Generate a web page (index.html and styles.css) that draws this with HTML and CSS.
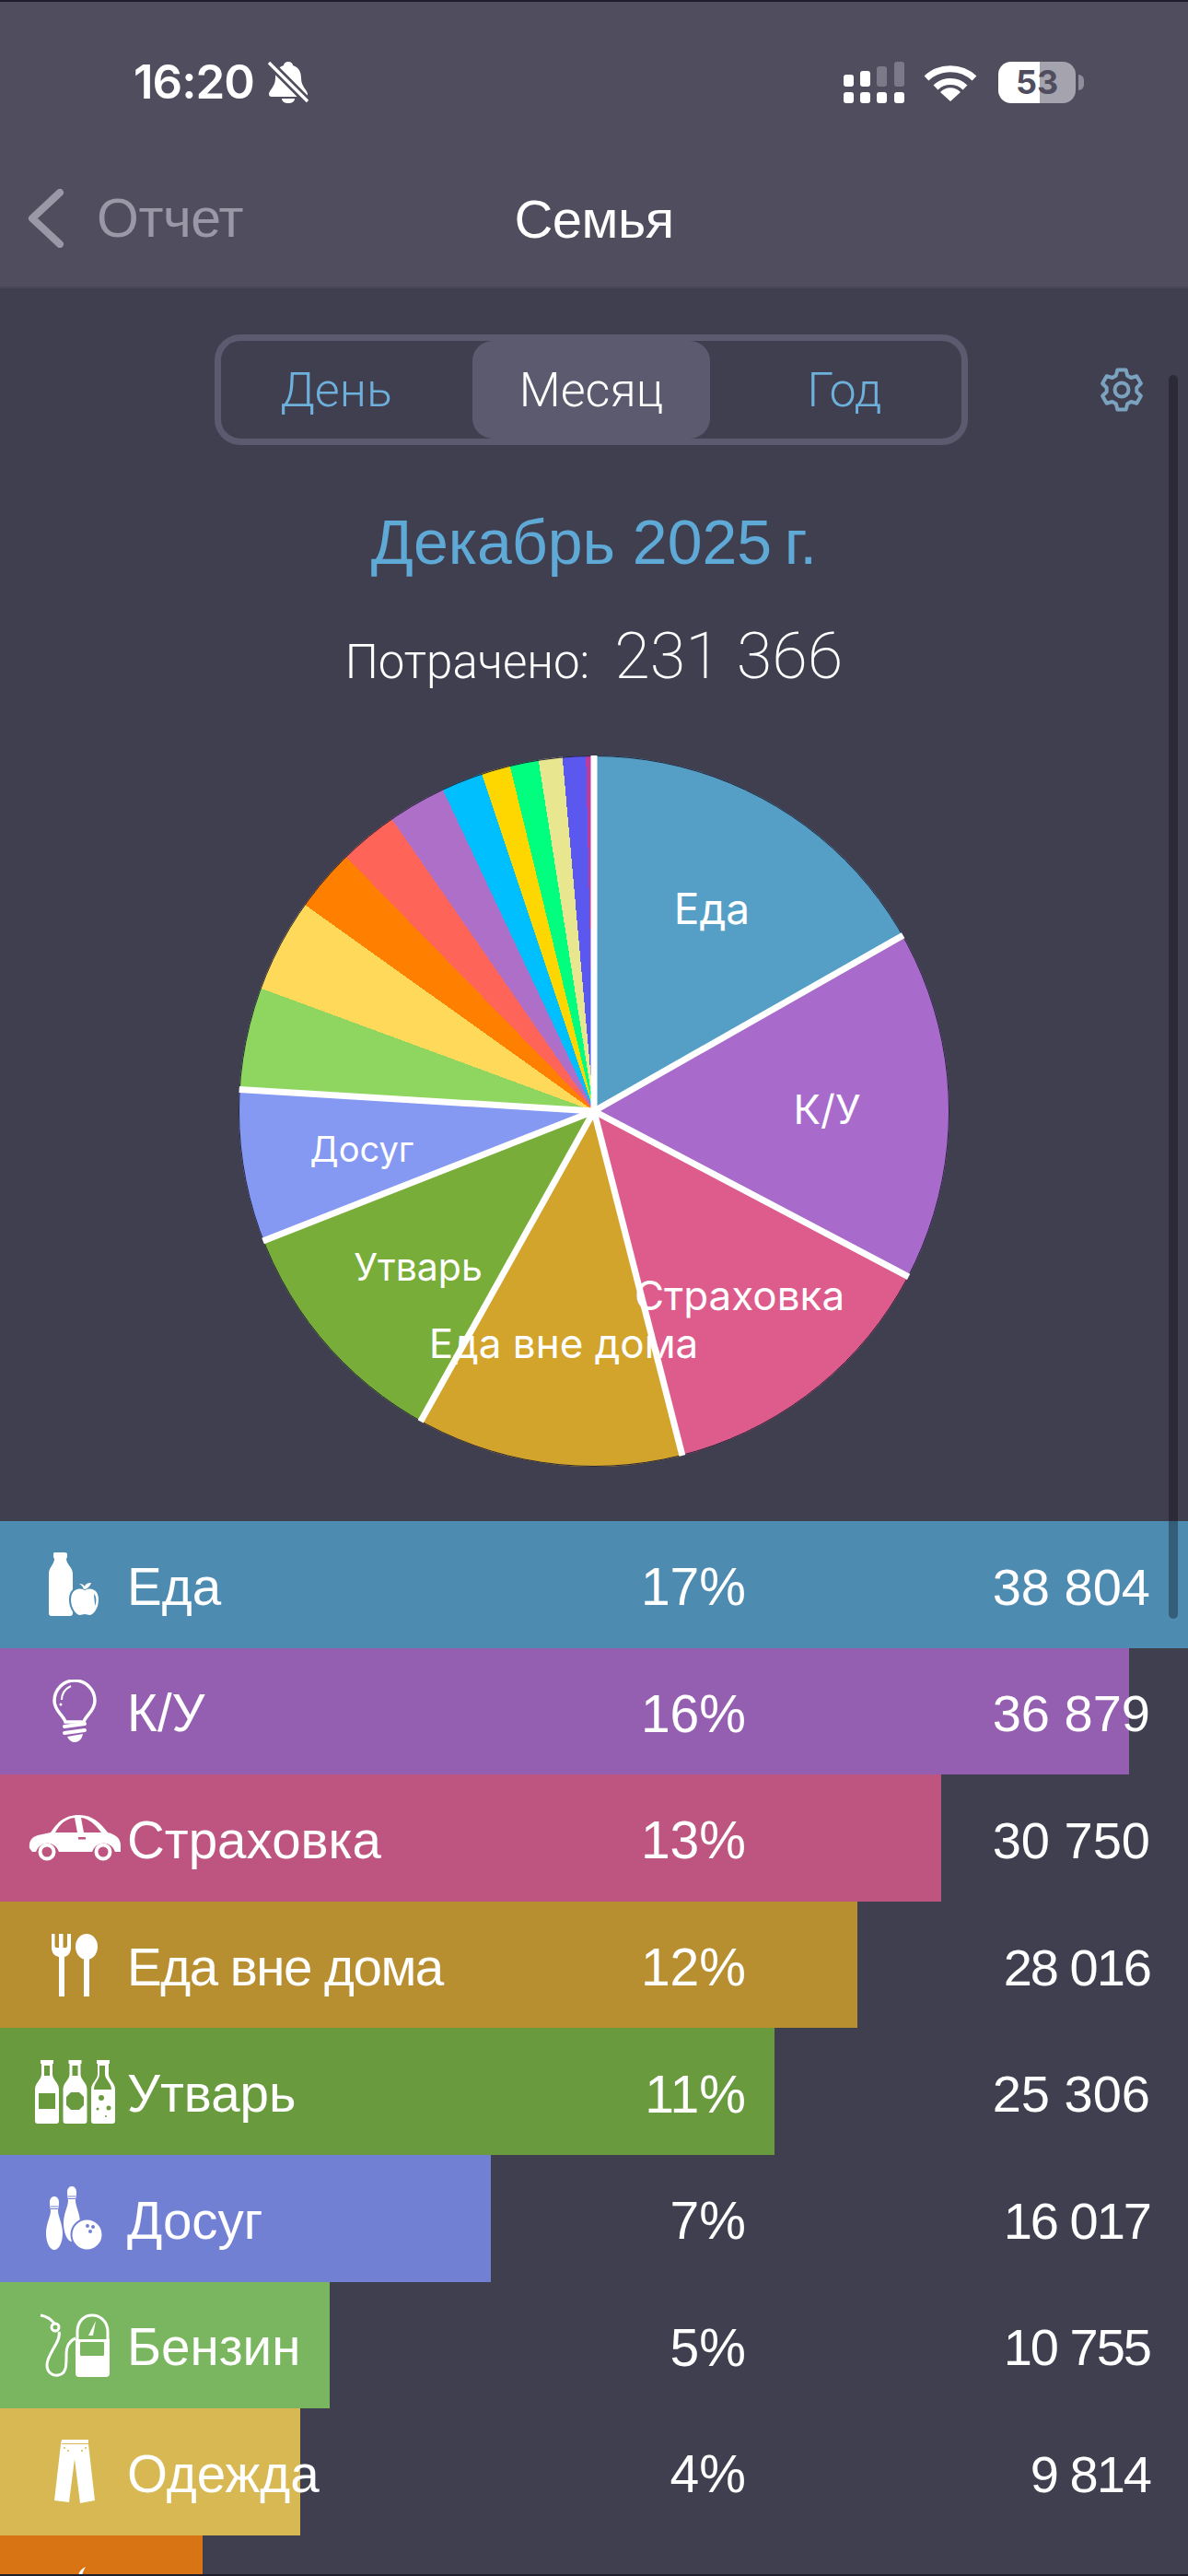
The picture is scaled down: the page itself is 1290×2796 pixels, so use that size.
FILE: index.html
```html
<!DOCTYPE html>
<html>

<head>
    <title>Семья</title>
    <link rel="stylesheet" href="styles.css">
</head>

<body>
    <div class="screen">
        <div class="top-bar">
            <div class="status-bar">
                <div class="status-left">
                    <span class="clock">16:20</span>
                    <svg class="bell" viewBox="0 0 44 46">
                        <path d="M22 1c3 0 5 2 5 4 7 2 9 8 9 14 0 9 7 13 7 17 0 2-1 3-3 3H4c-2 0-3-1-3-3 0-4 7-8 7-17 0-6 2-12 9-14 0-2 2-4 5-4z" fill="#fff"/>
                        <path d="M15 41h14c0 3-3 5-7 5s-7-2-7-5z" fill="#fff"/>
                        <path d="M1 2l42 42" stroke="#504e5e" stroke-width="9"/>
                        <path d="M1 2l42 42" stroke="#fff" stroke-width="3.4"/>
                    </svg>
                </div>
                <div class="status-right">
                    <svg class="signal" viewBox="0 0 66 45">
                        <g fill="#fff">
                            <rect x="0" y="14" width="11" height="13" rx="3"/>
                            <rect x="18" y="10" width="11" height="17" rx="3"/>
                            <rect x="0" y="33" width="11" height="12" rx="3"/>
                            <rect x="18" y="33" width="11" height="12" rx="3"/>
                            <rect x="36" y="33" width="11" height="12" rx="3"/>
                            <rect x="55" y="33" width="11" height="12" rx="3"/>
                        </g>
                        <g fill="#7c7a88">
                            <rect x="36" y="5" width="11" height="22" rx="3"/>
                            <rect x="55" y="0" width="11" height="27" rx="3"/>
                        </g>
                    </svg>
                    <svg class="wifi" viewBox="0 0 58 42">
                        <g fill="none" stroke="#fff" stroke-width="7">
                            <path d="M3 17A38 38 0 0 1 55 17"/>
                            <path d="M13 27A23 23 0 0 1 45 27"/>
                        </g>
                        <path d="M29 42L18 32A15 15 0 0 1 40 32Z" fill="#fff"/>
                    </svg>
                    <div class="battery">
                        <span class="battery-level">53</span>
                        <span class="battery-nub"></span>
                    </div>
                </div>
            </div>
            <div class="nav-bar">
                <div class="back">
                    <svg class="chevron" viewBox="0 0 40 64">
                        <path d="M35 4L5 32l30 28" fill="none" stroke="#9a98a6" stroke-width="8" stroke-linecap="round" stroke-linejoin="round"/>
                    </svg>
                    <span>Отчет</span>
                </div>
                <h1>Семья</h1>
            </div>
        </div>

        <div class="scroll-thumb"></div>

        <div class="period-row">
            <div class="segment">
                <div class="segment-item item-day">День</div>
                <div class="segment-item selected">Месяц</div>
                <div class="segment-item item-year">Год</div>
            </div>
            <svg class="gear" viewBox="0 0 48 48">
                <polygon points="17.8,8.7 19.4,2.5 28.6,2.5 30.2,8.7 34.2,11 40.3,9.3 44.9,17.2 40.3,21.7 40.3,26.3 44.9,30.8 40.3,38.7 34.2,37 30.2,39.3 28.6,45.5 19.4,45.5 17.8,39.3 13.8,37 7.7,38.7 3.1,30.8 7.7,26.3 7.7,21.7 3.1,17.2 7.7,9.3 13.8,11" fill="none" stroke="#7ba3bf" stroke-width="4" stroke-linejoin="round"/>
                <circle cx="24" cy="24" r="7.5" fill="none" stroke="#7ba3bf" stroke-width="4"/>
            </svg>
        </div>

        <div class="month-title">Декабрь 2025&#8201;г.</div>
        <div class="spent">
            <span class="spent-label">Потрачено:</span>
            <span class="spent-total">231 366</span>
        </div>

        <div class="pie">
            <svg class="pie-lines" viewBox="-386 -386 772 772">
                <circle cx="0" cy="0" r="385.5" fill="none" stroke="#26263a" stroke-width="1"/>
                <g stroke="#fff" stroke-width="7">
                    <line x1="0" y1="0" x2="0" y2="-386"/>
                    <line x1="0" y1="0" x2="335.6" y2="-190.8"/>
                    <line x1="0" y1="0" x2="341.6" y2="179.8"/>
                    <line x1="0" y1="0" x2="95.9" y2="373.9"/>
                    <line x1="0" y1="0" x2="-188.3" y2="336.9"/>
                    <line x1="0" y1="0" x2="-359.4" y2="141"/>
                    <line x1="0" y1="0" x2="-385.3" y2="-23.6"/>
                </g>
            </svg>
            <span class="pie-label label-food">Еда</span>
            <span class="pie-label label-utility">К/У</span>
            <span class="pie-label label-insurance">Страховка</span>
            <span class="pie-label label-dining">Еда вне дома</span>
            <span class="pie-label label-goods">Утварь</span>
            <span class="pie-label label-leisure">Досуг</span>
        </div>

        <div class="rows">
            <div class="row">
                <div class="bar bar-food" style="width: 100%"></div>
                <div class="row-icon">
                    <svg width="56" height="70" viewBox="0 0 56 70">
                        <path d="M6 0h11q3 0 3 2v3l-1 2c0 6 7 9 7 16v43q0 3-3 3H3q-3 0-3-3V23c0-7 6-10 6-16L5 5V2q0-2 1-2z" fill="#fff"/>
                        <path d="M39 40c5-3 16-2 16 11 0 10-6 18-11 18-2 0-3-1-5-1s-3 1-5 1c-5 0-11-8-11-18 0-13 11-14 16-11z" fill="#fff" stroke="#4d8bb0" stroke-width="2"/>
                        <path d="M38 40c-1-3-3-5-5-6 3 0 5 1 6 3 1-3 3-4 7-4-1 3-3 6-7 7z" fill="#fff"/>
                        <path d="M49 45c3 3 3 9 1 13 0-5-1-9-1-13z" fill="#4d8bb0"/>
                    </svg>
                </div>
                <span class="row-name">Еда</span>
                <span class="row-percent">17%</span>
                <span class="row-value">38 804</span>
            </div>
            <div class="row">
                <div class="bar bar-utility" style="width: 95%"></div>
                <div class="row-icon">
                    <svg width="48" height="68" viewBox="0 0 48 68">
                        <g fill="none" stroke="#fff">
                            <path d="M14 46C12 39 2 34 2 23a22 22 0 0 1 44 0c0 11-10 16-12 23z" stroke-width="3.5"/>
                            <path d="M10 22c0-7 4-12 10-15" stroke-width="2"/>
                            <path d="M13 51l22-3M13 58l22-3" stroke-width="4" stroke-linecap="round"/>
                        </g>
                        <circle cx="9" cy="27" r="1.5" fill="#fff"/>
                        <path d="M16 62l17-3c-1 6-5 9-9 9-3 0-6-2-8-6z" fill="#fff"/>
                    </svg>
                </div>
                <span class="row-name">К/У</span>
                <span class="row-percent">16%</span>
                <span class="row-value">36 879</span>
            </div>
            <div class="row">
                <div class="bar bar-insurance" style="width: 79.2%"></div>
                <div class="row-icon">
                    <svg width="100" height="51" viewBox="0 0 100 51">
                        <path fill-rule="evenodd" d="M1 37C0 30 3 25 10 23l14-3C31 10 38 1 55 1c15 0 23 9 31 19 8 2 14 6 14 14v7h-6a13 13 0 0 0-25 0H33a13 13 0 0 0-25 0H4zM29 20h24L50 4C40 5 34 11 29 20zM57 4l3 16h19C72 11 66 5 57 4zM54 25v2.500h8V25z" fill="#fff"/>
                        <g fill="none" stroke="#fff" stroke-width="4">
                            <circle cx="20" cy="41" r="7.500"/>
                            <circle cx="81" cy="41" r="7.500"/>
                        </g>
                    </svg>
                </div>
                <span class="row-name">Страховка</span>
                <span class="row-percent">13%</span>
                <span class="row-value">30 750</span>
            </div>
            <div class="row">
                <div class="bar bar-dining" style="width: 72.2%"></div>
                <div class="row-icon">
                    <svg width="50" height="68" viewBox="0 0 50 68">
                        <path d="M0 0h3.500v13q0 2 2 2H8V0h4.500v15H15q2 0 2-2V0h4v14c0 7-3 10-7 11v43H8V25C3 24 0 21 0 14z" fill="#fff"/>
                        <ellipse cx="38" cy="14" rx="12" ry="14" fill="#fff"/>
                        <rect x="35" y="20" width="6" height="48" fill="#fff"/>
                    </svg>
                </div>
                <span class="row-name name-long">Еда вне дома</span>
                <span class="row-percent">12%</span>
                <span class="row-value value-tight">28 016</span>
            </div>
            <div class="row">
                <div class="bar bar-goods" style="width: 65.2%"></div>
                <div class="row-icon">
                    <svg width="87" height="69" viewBox="0 0 87 69">
                        <defs>
                            <path id="bottle" d="M6 0h14v4h-1v11c0 7 7 9 7 17v34q0 3-3 3H3q-3 0-3-3V32c0-8 7-10 7-17V4H6z"/>
                        </defs>
                        <g fill="#fff">
                            <use href="#bottle"/>
                            <use href="#bottle" x="30.500"/>
                            <use href="#bottle" x="61"/>
                        </g>
                        <g fill="#699a3e">
                            <rect x="10" y="6" width="6" height="11"/>
                            <rect x="4" y="36" width="18" height="17"/>
                            <rect x="40.500" y="6" width="6" height="11"/>
                            <polygon points="39,35 48,35 53,40 53,49 48,54 39,54 34,49 34,40"/>
                            <path d="M70 6h6v9c0 7 7 9 7 17H64c0-8 6-10 6-17z"/>
                            <circle cx="72" cy="41" r="3"/>
                            <circle cx="80" cy="52" r="2.500"/>
                            <circle cx="68" cy="53" r="1.500"/>
                            <circle cx="77" cy="61" r="1"/>
                        </g>
                    </svg>
                </div>
                <span class="row-name">Утварь</span>
                <span class="row-percent">11%</span>
                <span class="row-value">25 306</span>
            </div>
            <div class="row">
                <div class="bar bar-leisure" style="width: 41.3%"></div>
                <div class="row-icon">
                    <svg width="62" height="69" viewBox="0 0 62 69">
                        <path d="M9 11c3 0 5 3 5 6 0 5-1 7-1 10 0 5 5 14 5 24 0 10-4 18-9 18s-9-8-9-18c0-10 5-19 5-24 0-3-1-5-1-10 0-3 2-6 5-6z" fill="#fff"/>
                        <path d="M28 0c3 0 5 3 5 6 0 5-1 7-1 10 0 5 5 14 5 24 0 10-4 20-9 20s-9-10-9-20c0-10 5-19 5-24 0-3-1-5-1-10 0-3 2-6 5-6z" fill="#fff"/>
                        <g stroke="#7280d4" stroke-width="1">
                            <path d="M5 22h8M5 24.500h8M24 11h8M24 13.500h8"/>
                        </g>
                        <circle cx="44.500" cy="52.500" r="17" fill="#fff" stroke="#7280d4" stroke-width="2"/>
                        <g fill="#7280d4">
                            <circle cx="45" cy="43" r="2"/>
                            <circle cx="51" cy="44" r="2"/>
                            <circle cx="48" cy="49" r="2"/>
                        </g>
                    </svg>
                </div>
                <span class="row-name">Досуг</span>
                <span class="row-percent">7%</span>
                <span class="row-value value-tight">16 017</span>
            </div>
            <div class="row">
                <div class="bar bar-fuel" style="width: 27.750%"></div>
                <div class="row-icon">
                    <svg width="76" height="69" viewBox="0 0 76 69">
                        <g fill="none" stroke="#fff" stroke-width="3">
                            <path d="M1 2c7 1 12 5 15 9"/>
                            <circle cx="17" cy="15" r="4"/>
                            <path d="M21 20c3 10-13 24-13 36 0 8 6 12 12 11 10-1 9-13 9-23 0-8 3-14 10-17"/>
                            <path d="M41 48V20C41 9 48 2 57 2s17 7 17 18v28"/>
                        </g>
                        <path d="M39 28h37v37q0 4-4 4H43q-4 0-4-4z" fill="#fff"/>
                        <rect x="44" y="31" width="26" height="15" rx="1" fill="#7ab65f"/>
                        <path d="M53 24l8-16-3 16z" fill="#fff"/>
                    </svg>
                </div>
                <span class="row-name">Бензин</span>
                <span class="row-percent">5%</span>
                <span class="row-value value-tight">10 755</span>
            </div>
            <div class="row">
                <div class="bar bar-clothes" style="width: 25.300%"></div>
                <div class="row-icon">
                    <svg width="45" height="69" viewBox="0 0 45 69">
                        <path d="M8 0h29v3l0 2 7 61-16 3-6-48-6 47-16-2L7 5z" fill="#fff"/>
                        <path d="M8 4.500h29" stroke="#d7b853" stroke-width="1"/>
                        <g fill="#d7b853">
                            <circle cx="11" cy="9" r="1"/>
                            <circle cx="15" cy="12" r="1"/>
                            <circle cx="30" cy="12" r="1"/>
                            <circle cx="34" cy="9" r="1"/>
                        </g>
                    </svg>
                </div>
                <span class="row-name">Одежда</span>
                <span class="row-percent">4%</span>
                <span class="row-value value-tight">9 814</span>
            </div>
            <div class="row">
                <div class="bar bar-other" style="width: 17.050%"></div>
                <div class="row-icon">
                    <svg width="60" height="69" viewBox="0 0 60 69">
                        <path d="M42 0c-4 2-7 5-8 9h4c1-3 2-6 4-9z" fill="#fff"/>
                    </svg>
                </div>
            </div>
        </div>
    </div>
</body>

</html>
```

FILE: styles.css
```css
/* Report screen */
body {
    background-color: #403f50;
    color: #ffffff;
    font-family: "Liberation Sans", Arial, sans-serif;
    margin: 0;
    padding: 0;
}

.screen {
    position: relative;
    height: 2796px;
    box-sizing: border-box;
    border-top: 2px solid #1e1e2c;
    border-bottom: 2px solid #1e1e2c;
    overflow: hidden;
}

.top-bar {
    height: 311px;
    box-sizing: border-box;
    background-color: #504e5e;
    border-bottom: 2px solid #47465a;
}

.status-bar {
    display: flex;
    justify-content: space-between;
    align-items: center;
    height: 50px;
    padding: 62px 122px 0 145px;
}

.status-left {
    display: flex;
    align-items: center;
    gap: 15px;
}

.clock {
    font-family: Inter, sans-serif;
    font-size: 51px;
    font-weight: 600;
    line-height: 50px;
    letter-spacing: -1px;
}

.bell {
    width: 44px;
    height: 46px;
}

.status-right {
    display: flex;
    align-items: center;
}

.signal {
    width: 66px;
    height: 45px;
    margin-right: 21px;
}

.wifi {
    width: 58px;
    height: 42px;
    margin-right: 23px;
}

.battery {
    position: relative;
    width: 84px;
    height: 45px;
    border-radius: 14px;
    background: linear-gradient(to right, #ffffff 53%, #a5a3ae 53%);
    color: #504e5e;
    font-family: Inter, sans-serif;
    font-size: 36px;
    font-weight: 700;
    line-height: 45px;
    text-align: center;
}

.battery-nub {
    position: absolute;
    top: 14px;
    right: -9px;
    width: 6px;
    height: 17px;
    border-radius: 0 6px 6px 0;
    background-color: #8f8d99;
}

.nav-bar {
    display: flex;
    align-items: center;
    justify-content: center;
    position: relative;
    height: 64px;
    margin-top: 91px;
}

.nav-bar h1 {
    margin: 0;
    font-size: 58px;
    font-weight: normal;
    letter-spacing: -0.5px;
}

.back {
    position: absolute;
    left: 30px;
    top: 0;
    display: flex;
    align-items: center;
    gap: 35px;
    height: 64px;
    color: #9a98a6;
    font-size: 59px;
    letter-spacing: -0.5px;
}

.chevron {
    width: 40px;
    height: 64px;
}

.scroll-thumb {
    position: absolute;
    top: 405px;
    right: 11px;
    z-index: 1;
    width: 10px;
    height: 1350px;
    border-radius: 5px;
    background-color: rgba(0, 0, 0, 0.32);
}

.period-row {
    display: flex;
    align-items: center;
    margin-top: 50px;
    padding-left: 233px;
}

.segment {
    display: grid;
    grid-template-columns: 1fr 1fr 1fr;
    width: 818px;
    height: 120px;
    box-sizing: border-box;
    border: 7px solid #5c5a6e;
    border-radius: 28px;
    font-family: Roboto, sans-serif;
    font-weight: 300;
    font-size: 52px;
}

.segment-item {
    display: flex;
    align-items: center;
    justify-content: center;
    color: #6eb0dc;
}

.item-day {
    padding-right: 18px;
}

.item-year {
    padding-left: 14px;
}

.segment-item.selected {
    margin: 0 5px;
    border-radius: 22px;
    background-color: #5c5a6e;
    color: #ffffff;
}

.gear {
    width: 48px;
    height: 48px;
    margin-left: 143px;
}

.month-title {
    margin-top: 65px;
    color: #5ea9d6;
    font-size: 68px;
    line-height: 80px;
    text-align: center;
}

.spent {
    display: flex;
    justify-content: center;
    align-items: baseline;
    gap: 27px;
    margin-top: 44px;
    font-family: Roboto, sans-serif;
    font-weight: 300;
    line-height: 80px;
}

.spent-label {
    font-size: 51px;
}

.spent-total {
    font-size: 70px;
    font-weight: 200;
}

.pie {
    position: relative;
    width: 772px;
    height: 772px;
    margin: 61px auto 0;
    border-radius: 50%;
    background: conic-gradient(
        #559fc7 0 60.38deg,
        #a86bcb 0 117.76deg,
        #dd5c8c 0 165.61deg,
        #d3a42b 0 209.2deg,
        #78ad3a 0 248.58deg,
        #8598f2 0 273.5deg,
        #8fd660 0 290.23deg,
        #ffd95a 0 305.5deg,
        #ff8000 0 315.7deg,
        #ff6459 0 325.3deg,
        #ae6fc8 0 334.8deg,
        #00bfff 0 341.6deg,
        #ffd700 0 346.3deg,
        #00ff7f 0 351deg,
        #e8e68f 0 354.9deg,
        #5a58ee 0 358.7deg,
        #c03a9e 0 360deg
    );
}

.pie-lines {
    position: absolute;
    top: 0;
    left: 0;
    width: 772px;
    height: 772px;
}

.pie-label {
    position: absolute;
    transform: translate(-50%, -50%);
    font-family: Inter, sans-serif;
    font-size: 44px;
    white-space: nowrap;
}

.label-food {
    left: 514px;
    top: 166px;
    font-size: 46px;
}

.label-utility {
    left: 639px;
    top: 384px;
}

.label-insurance {
    left: 544px;
    top: 586px;
}

.label-dining {
    left: 353px;
    top: 638px;
}

.label-goods {
    left: 195px;
    top: 555px;
    font-size: 41px;
}

.label-leisure {
    left: 134px;
    top: 427px;
    font-size: 38px;
}

.rows {
    margin-top: 59px;
}

.row {
    position: relative;
    display: flex;
    align-items: center;
    height: 137.6px;
    font-size: 56.5px;
}

.bar {
    position: absolute;
    top: 0;
    bottom: 0;
    left: 0;
}

.bar-food { background-color: #4d8bb0; }
.bar-utility { background-color: #945fb0; }
.bar-insurance { background-color: #bd5580; }
.bar-dining { background-color: #b78e30; }
.bar-goods { background-color: #699a3e; }
.bar-leisure { background-color: #7280d4; }
.bar-fuel { background-color: #7ab65f; }
.bar-clothes { background-color: #d7b853; }
.bar-other { background-color: #d87413; }

.row-icon {
    position: relative;
    display: flex;
    justify-content: center;
    width: 162px;
    flex-shrink: 0;
}

.row-icon svg {
    display: block;
}

.row-name {
    position: relative;
    width: 428px;
    margin-left: -24px;
    padding-top: 5px;
}

.name-long {
    letter-spacing: -1.5px;
}

.row-percent {
    position: relative;
    width: 244px;
    padding-top: 5px;
    text-align: right;
    font-size: 57px;
}

.row-value {
    position: relative;
    width: 439px;
    padding-top: 5px;
    text-align: right;
    font-size: 56px;
}

/* numbers with a 1 run narrower in the reference */
.value-tight {
    letter-spacing: -2px;
}
```
